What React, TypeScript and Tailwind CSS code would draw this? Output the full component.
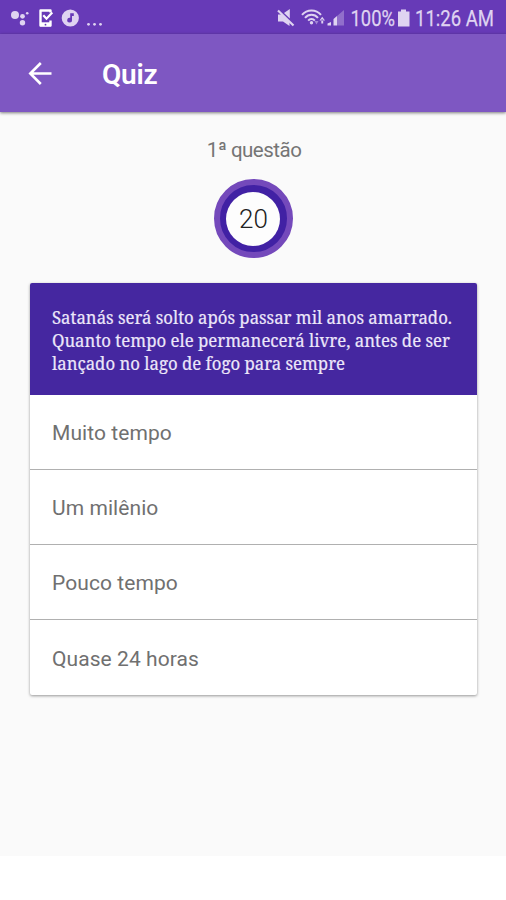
import type { ReactNode } from "react";

const QUESTION_LINES = [
  { text: "Satanás será solto após passar mil anos amarrado.", width: "w-[400px]" },
  { text: "Quanto tempo ele permanecerá livre, antes de ser", width: "w-[398px]" },
  { text: "lançado no lago de fogo para sempre", width: "w-[293px]" },
];

const ANSWERS = ["Muito tempo", "Um milênio", "Pouco tempo", "Quase 24 horas"];

const StatusBar = () => (
  <div className="flex h-[34px] items-center bg-[#673ab7] pl-[11px] text-[#dfd3f1]">
    <svg width="94" height="34" viewBox="0 0 94 34" fill="currentColor">
      <circle cx="4" cy="15" r="4" />
      <circle cx="11.5" cy="16.3" r="2.4" />
      <circle cx="16.2" cy="13.3" r="1.3" />
      <circle cx="11.5" cy="22.8" r="2.7" />
      <g stroke="#fff" fill="none">
        <path d="M39.5 12.5V10.5H29.5V25.5H39.5V20.5" strokeWidth="2.4" strokeLinejoin="round" />
        <path d="M29 24.3H40" strokeWidth="4" />
        <path d="M32.3 15.3L35.5 18.7L41.3 12.6" strokeWidth="2.2" />
      </g>
      <circle cx="34.5" cy="24.7" r="0.9" fill="#673ab7" />
      <circle cx="59.3" cy="18" r="8.6" />
      <path d="M59.2 13.2H62.8V16H61V20A2.4 2.4 0 1 1 59.2 17.8Z" fill="#673ab7" />
      <circle cx="77.5" cy="24.3" r="1.4" />
      <circle cx="83.5" cy="24.3" r="1.4" />
      <circle cx="89.5" cy="24.3" r="1.4" />
    </svg>
    <div className="ml-auto flex items-center">
      <svg width="70" height="34" viewBox="0 0 70 34" fill="currentColor">
        <path d="M1 14.5H5L12.5 21.5V26L6 21.5H1Z" />
        <path d="M7 13L12.8 9V18.5Z" />
        <path d="M1 10.5L16.5 25.5" stroke="currentColor" strokeWidth="2.2" />
        <g fill="none" stroke="currentColor" strokeWidth="2">
          <path d="M25 14.8C30 9 39 9 44 14.8" />
          <path d="M28 17.8C31.5 13.7 37.5 13.7 41 17.8" />
          <path d="M31.2 20.6C33 18.5 36 18.5 37.8 20.6" />
        </g>
        <circle cx="34.5" cy="22.7" r="1.7" />
        <path d="M37.5 21H41.5L39.5 24.5Z" opacity="0.5" />
        <path d="M42.5 20.5H48L45.2 16.8ZM44.3 19.5H46.2V23.5H44.3Z" />
        <path d="M50.5 25.5V23.5L54 22V25.5ZM56.5 25.5V19L60 16V25.5Z" />
        <path d="M60 25.5V16L67 10V25.5Z" opacity="0.35" />
      </svg>
      <svg width="159" height="34" viewBox="0 0 159 34" fill="currentColor">
        <g fontFamily="Roboto, sans-serif" fontSize="21.5" stroke="currentColor" strokeWidth="0.25">
          <text x="3.5" y="26" textLength="44.5" lengthAdjust="spacingAndGlyphs">100%</text>
          <text x="68" y="26" textLength="79" lengthAdjust="spacingAndGlyphs">11:26 AM</text>
        </g>
        <path d="M54 9.5H59V11.5H62.5V26.5H51V11.5H54Z" />
      </svg>
    </div>
  </div>
);

const AppBar = ({ title }: { title: string }) => (
  <header className="flex h-[78px] items-center bg-[#7e57c2] pl-[28px] text-white shadow-[0_1px_3px_rgba(0,0,0,0.5)]">
    <svg width="24" height="24" viewBox="0 0 24 24" fill="none" stroke="currentColor" strokeWidth="2.6">
      <path d="M23.5 12.5H2.5M12.8 2L2.3 12.5L12.8 23" />
    </svg>
    <h1 className="ml-[50px] mt-[3px] text-[28px] leading-8 font-semibold tracking-[-0.2px]">{title}</h1>
  </header>
);

const Timer = ({ children }: { children: ReactNode }) => (
  <div className="mt-[15px] flex size-[79px] items-center justify-center rounded-full border-[6px] border-[#7449bb] bg-[#4121a4]">
    <div className="flex size-[54px] items-center justify-center rounded-full bg-[#fdfdfd] pl-px text-[26px] leading-none font-light text-[#222]">
      {children}
    </div>
  </div>
);

export default function App() {
  return (
    <div className="h-[900px] w-[506px] overflow-hidden bg-white font-[Roboto,sans-serif]">
      <div className="h-[856px] bg-[#fafafa]">
        <StatusBar />
        <AppBar title="Quiz" />
        <main className="flex flex-col items-center px-[29px] pt-[24px]">
          <p className="pl-[2px] text-[20.5px] leading-7 tracking-[-0.5px] text-[#757575]">1ª questão</p>
          <Timer>20</Timer>
          <section className="mt-[25px] ml-px w-[447px] overflow-hidden rounded-[2px] bg-white shadow-[0_1px_3px_rgba(0,0,0,0.4)]">
            <div className="h-[112px] bg-[#4527a0] pt-[23px] pl-[22px] text-[#ede7fa]">
              {QUESTION_LINES.map((line) => (
                <p key={line.text} className={line.width}>
                  <svg className="block h-[23px] w-full overflow-visible" fill="currentColor">
                    <text
                      x="0"
                      y="18"
                      fontFamily="'Noto Serif', 'DejaVu Serif', serif"
                      fontSize="17.5"
                      textLength="100%"
                      lengthAdjust="spacingAndGlyphs"
                      stroke="currentColor"
                      strokeWidth="0.2"
                    >
                      {line.text}
                    </text>
                  </svg>
                </p>
              ))}
            </div>
            <ul>
              {ANSWERS.map((answer) => (
                <li
                  key={answer}
                  className="flex h-[75px] items-center border-b border-[#b0b0b0] pt-[4px] pl-[22px] text-[21px] tracking-[0.07px] text-[#707070] last:border-b-0"
                >
                  {answer}
                </li>
              ))}
            </ul>
          </section>
        </main>
      </div>
    </div>
  );
}
